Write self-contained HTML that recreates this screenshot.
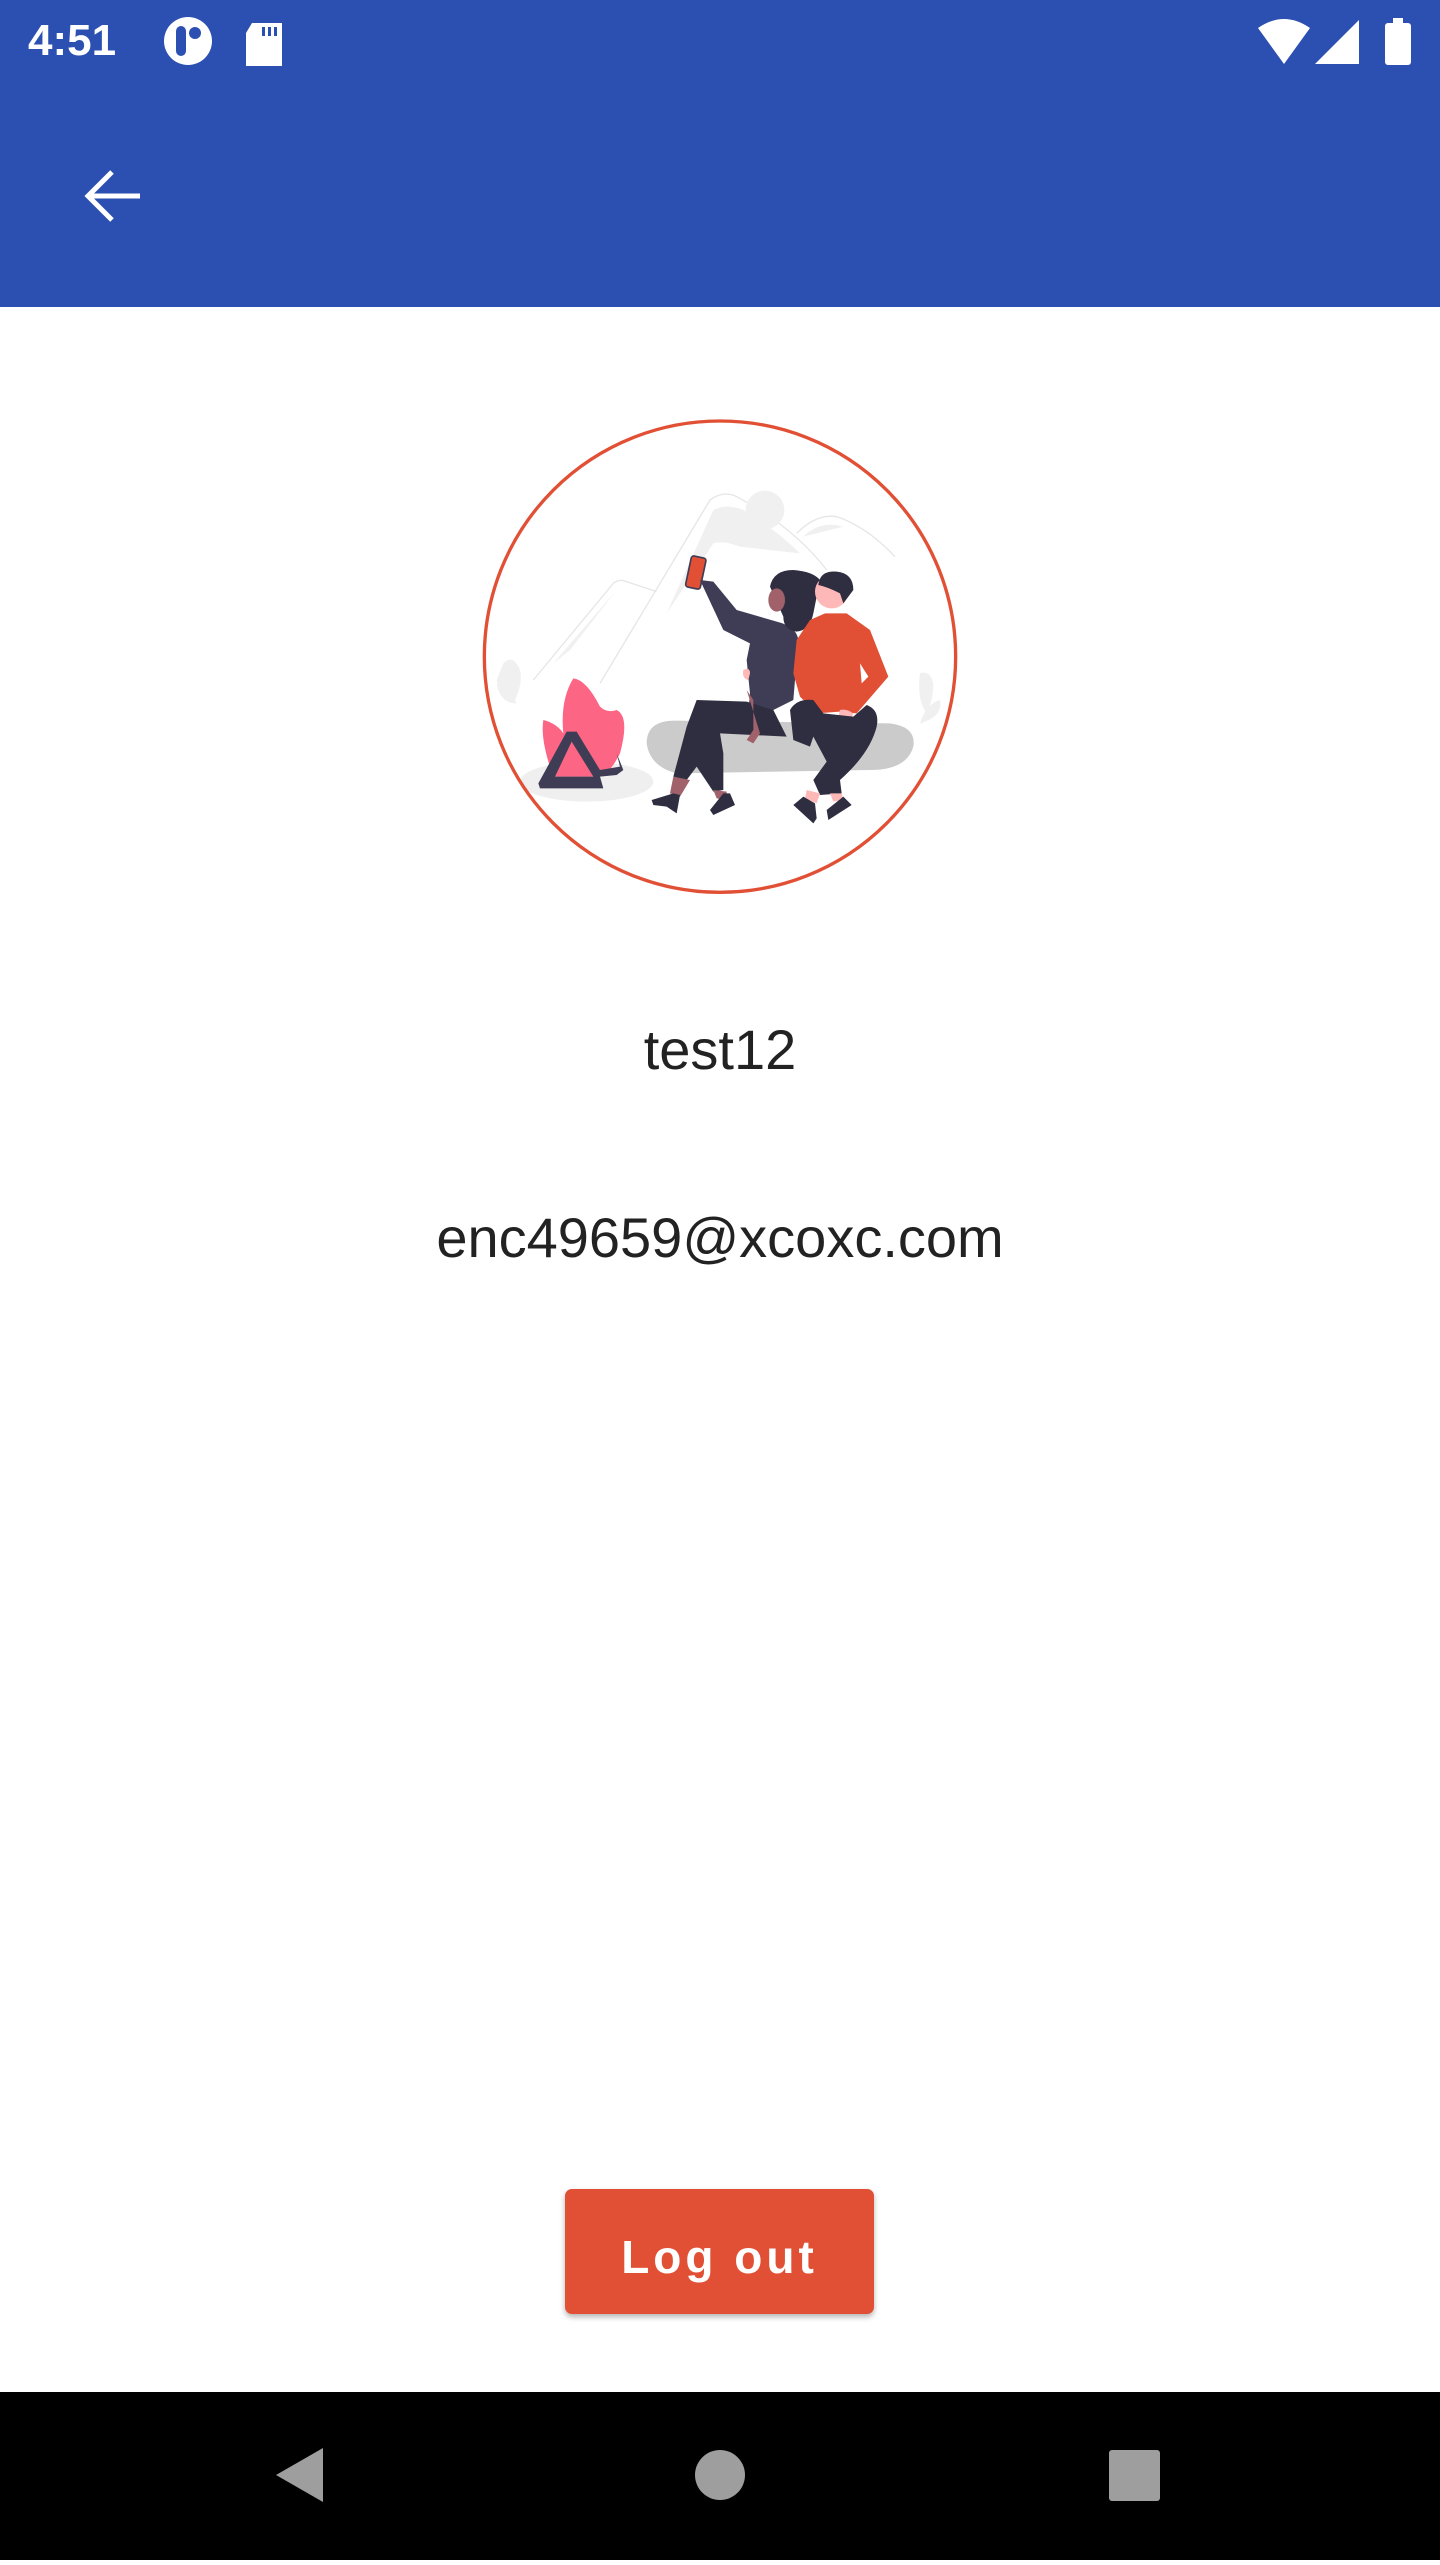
<!DOCTYPE html>
<html><head><meta charset="utf-8"><style>
html,body{margin:0;padding:0}
body{width:1440px;height:2560px;position:relative;background:#fff;font-family:"Liberation Sans",Roboto,sans-serif;overflow:hidden}
.bar{position:absolute;left:0;top:0;width:1440px;height:307px;background:#2c50b2}
.time{position:absolute;left:28px;top:16px;color:#fff;font-size:44px;font-weight:bold;letter-spacing:0}
.txt{position:absolute;left:0;width:1440px;text-align:center;color:#222;font-size:56px}
.btn{position:absolute;left:565px;top:2189px;width:309px;height:125px;background:#e15035;border-radius:7px;box-shadow:0 3px 6px rgba(0,0,0,.3);color:#fff;font-size:46px;font-weight:bold;letter-spacing:4px;text-align:center;line-height:137px}
.nav{position:absolute;left:0;top:2392px;width:1440px;height:168px;background:#000}
</style></head><body>
<div class="bar">
<div class="time">4:51</div>
<svg style="position:absolute;left:0;top:0" width="1440" height="307">
<ellipse cx="188" cy="41" rx="24" ry="24" fill="#fff"/>
<rect x="176" y="26" width="10" height="30" rx="5" fill="#2c50b2"/>
<circle cx="195" cy="33" r="6" fill="#2c50b2"/>
<path d="M252 23 h30 v43 h-36 v-33 z" fill="#fff"/>
<rect x="262" y="27" width="3" height="9" fill="#2c50b2"/><rect x="268" y="27" width="3" height="9" fill="#2c50b2"/><rect x="274" y="27" width="3" height="9" fill="#2c50b2"/>
<path d="M1258 28 q26 -18 52 0 l-26 36 z" fill="#fff"/>
<path d="M1359 20 v44 h-44 z" fill="#fff"/>
<rect x="1385" y="23" width="26" height="42" rx="3" fill="#fff"/><rect x="1393" y="18" width="10" height="6" fill="#fff"/>
<path d="M140 196 H88 M112 172 L88 196 L112 220" stroke="#fff" stroke-width="5" fill="none"/>
</svg>
</div>
<svg style="position:absolute;left:460px;top:400px" width="520" height="520" viewBox="0 0 1560 1560">
<g fill="none" stroke="#e6e6e6" stroke-width="4">
<path d="M220 840 L460 550 Q480 535 500 545 L590 575"/>
<path d="M420 850 L750 300 Q790 270 830 290 Q1000 380 1100 510"/>
<path d="M1010 400 Q1070 340 1130 350 Q1220 380 1305 470"/>
</g>
<g fill="#f0f0f0">
<circle cx="915" cy="330" r="58"/>
<path d="M620 640 L760 330 Q800 310 850 330 Q950 390 1020 460 L840 440 Q790 420 760 430 Z"/>
<path d="M1030 410 Q1080 360 1150 380 Z"/>
<path d="M280 790 L470 570 L330 750 Z"/>
<path d="M130 790 q30 -30 50 20 q10 40 -20 100 q-40 -20 -50 -70 z M110 850 q40 10 60 60 q-50 0 -60 -60z"/>
<path d="M1380 820 q30 -10 40 30 q0 50 -20 90 q-30 -40 -20 -120z M1440 900 q10 50 -60 70 q20 -60 60 -70z"/>
</g>
<ellipse cx="380" cy="1145" rx="200" ry="60" fill="#efefef"/>
<path d="M560 1030 Q560 960 650 962 L1290 970 Q1370 980 1360 1040 Q1340 1110 1230 1110 L650 1120 Q570 1100 560 1030Z" fill="#cbcbcb"/>
<path d="M280 1130 Q240 1020 250 960 Q290 970 310 1000 Q300 900 340 835 Q380 840 420 920 Q440 940 470 930 Q510 950 480 1060 Q450 1120 420 1130 Z" fill="#fd6584"/>
<path d="M235 1150 L320 995 L350 995 L420 1110 L480 1100 L470 1060 L490 1110 L470 1125 L420 1130 L430 1165 L240 1165 Z M285 1130 L400 1130 L335 1025 Z" fill="#3f3d56" fill-rule="evenodd"/>
<rect x="685" y="470" width="45" height="95" rx="8" fill="#e15035" stroke="#3f3d56" stroke-width="5" transform="rotate(12 707 517)"/>
<path d="M720 540 L760 545 L830 630 L950 665 Q1010 680 1015 720 L1000 900 L940 930 L880 1010 L860 990 L870 880 L860 780 L870 730 L790 690 Z" fill="#3f3d56"/>
<path d="M930 560 Q940 510 1000 510 Q1060 515 1080 540 L1060 640 Q1050 690 1010 695 Q970 690 970 650 Z" fill="#2f2e41"/>
<ellipse cx="950" cy="600" rx="25" ry="35" fill="#a0616a"/>
<path d="M710 900 L860 905 L940 930 L980 1010 L780 1000 L790 1060 L790 1170 L760 1175 L710 1100 L680 1140 L640 1130 L680 980 Z" fill="#2f2e41"/>
<path d="M640 1130 L690 1140 L660 1190 L630 1180 Z M760 1170 L800 1175 L800 1200 L770 1195Z" fill="#a0616a"/>
<path d="M575 1200 L640 1180 L660 1185 L650 1240 L620 1220 L580 1215Z M750 1230 L790 1180 L810 1180 L825 1215 L760 1245Z" fill="#2f2e41"/>
<path d="M860 870 L880 900 L880 990 L860 1020 L880 1030 L900 1000 Z" fill="#a0616a"/>
<circle cx="1115" cy="575" r="50" fill="#ffb8b8"/>
<path d="M1075 555 Q1080 510 1130 515 Q1180 520 1180 570 L1150 610 L1140 580 Q1100 560 1075 555Z" fill="#2f2e41"/>
<path d="M1050 660 L1095 640 L1160 640 L1230 690 L1285 830 L1190 940 L1140 935 L1070 940 L1020 890 L1000 820 L1010 720 Z" fill="#e15035"/>
<path d="M1200 790 L1225 830 L1205 850 Z" fill="#fff"/>
<path d="M1140 930 Q1160 925 1180 940 L1170 965 Q1140 970 1135 950 Z" fill="#ffb8b8"/>
<path d="M850 810 Q870 800 870 820 L865 840 Q845 835 850 810Z" fill="#ffb8b8"/>
<path d="M990 930 Q1010 895 1060 900 L1090 940 L1180 950 L1220 915 Q1260 930 1250 980 Q1230 1060 1140 1140 L1145 1180 L1080 1185 L1060 1140 L1100 1085 L1060 1010 L1050 1040 L1000 1020 Z" fill="#2f2e41"/>
<path d="M1040 1170 L1080 1180 L1070 1210 L1035 1195Z M1110 1180 L1145 1180 L1150 1200 L1120 1205Z" fill="#ffb8b8"/>
<path d="M1000 1215 L1030 1190 L1065 1210 L1070 1255 L1060 1270 Z M1100 1230 L1150 1190 L1175 1215 L1105 1260Z" fill="#2f2e41"/>
<circle cx="780" cy="770" r="707" fill="none" stroke="#e15035" stroke-width="10"/>
</svg>
<div class="txt" style="top:1017px">test12</div>
<div class="txt" style="top:1205px">enc49659@xcoxc.com</div>
<div class="btn">Log out</div>
<div class="nav">
<svg width="1440" height="168">
<path d="M323 56 v54 l-47 -27 z" fill="#9e9e9e"/>
<circle cx="720" cy="83" r="25" fill="#9e9e9e"/>
<rect x="1109" y="58" width="51" height="51" rx="3" fill="#9e9e9e"/>
</svg>
</div>
</body></html>
